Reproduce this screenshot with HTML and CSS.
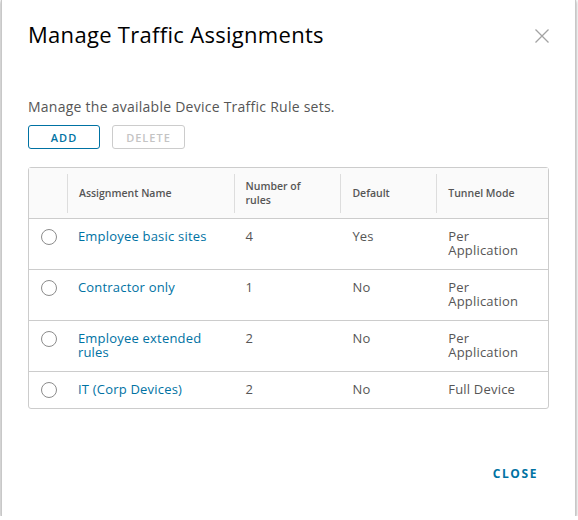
FILE: index.html
```html
<!DOCTYPE html>
<html>
<head>
<meta charset="utf-8">
<link rel="stylesheet" href="styles.css">
</head>
<body>
<div class="modal">
  <div class="modal-header">
    <h3 class="modal-title">Manage Traffic Assignments</h3>
    <button class="close-x" aria-label="Close">
      <svg width="16" height="16" viewBox="0 0 16 16"><path d="M1.5 1.5L14.5 14.5M14.5 1.5L1.5 14.5" stroke="#a3a3a3" stroke-width="1.3" fill="none"/></svg>
    </button>
  </div>
  <div class="modal-body">
    <p class="desc">Manage the available Device Traffic Rule sets.</p>
    <div class="btn-row">
      <button class="btn btn-primary">ADD</button>
      <button class="btn btn-disabled">DELETE</button>
    </div>
    <div class="grid">
      <div class="row head">
        <div class="cell c-sel"></div>
        <div class="cell c-name"><span class="sep"></span>Assignment Name</div>
        <div class="cell c-num"><span class="sep"></span>Number of rules</div>
        <div class="cell c-def"><span class="sep"></span>Default</div>
        <div class="cell c-mode"><span class="sep"></span>Tunnel Mode</div>
      </div>
      <div class="row">
        <div class="cell c-sel"><span class="radio"></span></div>
        <div class="cell c-name"><a class="link">Employee basic sites</a></div>
        <div class="cell c-num">4</div>
        <div class="cell c-def">Yes</div>
        <div class="cell c-mode">Per Application</div>
      </div>
      <div class="row">
        <div class="cell c-sel"><span class="radio"></span></div>
        <div class="cell c-name"><a class="link">Contractor only</a></div>
        <div class="cell c-num">1</div>
        <div class="cell c-def">No</div>
        <div class="cell c-mode">Per Application</div>
      </div>
      <div class="row">
        <div class="cell c-sel"><span class="radio"></span></div>
        <div class="cell c-name"><a class="link">Employee extended rules</a></div>
        <div class="cell c-num">2</div>
        <div class="cell c-def">No</div>
        <div class="cell c-mode">Per Application</div>
      </div>
      <div class="row last">
        <div class="cell c-sel"><span class="radio"></span></div>
        <div class="cell c-name"><a class="link">IT (Corp Devices)</a></div>
        <div class="cell c-num">2</div>
        <div class="cell c-def">No</div>
        <div class="cell c-mode">Full Device</div>
      </div>
    </div>
  </div>
  <div class="modal-footer">
    <button class="btn-link">CLOSE</button>
  </div>
</div>
</body>
</html>
```
FILE: styles.css
```css
html, body {
  margin: 0;
  padding: 0;
  background: #ffffff;
}
body {
  font-family: "Open Sans", "Noto Sans", sans-serif;
  color: #565656;
}
.modal {
  box-sizing: border-box;
  width: 575px;
  height: 516px;
  margin: 0 0 0 1px;
  background: #fff;
  border-left: 1px solid #c8c8c8;
  border-right: 1px solid #c8c8c8;
  box-shadow: 0 1px 3px rgba(0,0,0,0.45);
  padding: 0 26px 0 26px;
  display: flex;
  flex-direction: column;
}
.modal-header {
  display: flex;
  justify-content: space-between;
  align-items: flex-start;
  padding-top: 20px;
}
.modal-title {
  margin: 0;
  font-size: 22px;
  font-weight: 400;
  color: #000;
  line-height: 28px;
  letter-spacing: 0.3px;
}
.close-x {
  border: 0;
  background: none;
  padding: 0;
  margin: 8px -1px 0 0;
  width: 16px;
  height: 16px;
  display: flex;
}
.modal-body {
  padding-top: 50px;
}
.desc {
  margin: 0;
  font-size: 14px;
  line-height: 18px;
  color: #565656;
  letter-spacing: 0.25px;
}
.btn-row {
  display: flex;
  gap: 12px;
  margin-top: 9px;
}
.btn {
  box-sizing: border-box;
  height: 24px;
  border-radius: 3px;
  background: #fff;
  font-family: inherit;
  font-size: 11px;
  font-weight: 600;
  letter-spacing: 1px;
  padding: 0;
}
.btn-primary {
  width: 72px;
  border: 1px solid #0072a3;
  color: #0072a3;
}
.btn-disabled {
  width: 73px;
  border: 1px solid #cccccc;
  color: #c4c4c4;
}
.grid {
  margin-top: 18px;
  border: 1px solid #cccccc;
  border-radius: 3px;
  font-size: 13px;
  line-height: 14px;
  letter-spacing: 0.2px;
}
.row {
  display: flex;
  border-bottom: 1px solid #cccccc;
}
.row.last {
  border-bottom: 0;
}
.row.head {
  background: #fafafa;
  font-size: 10.5px;
  font-weight: 600;
  color: #565656;
  letter-spacing: 0;
}
.cell {
  box-sizing: border-box;
  padding: 10px 12px 12px 12px;
  position: relative;
}
.head .cell {
  padding: 11px 12px 11px 12px;
  min-height: 50px;
  display: flex;
  align-items: center;
  line-height: 14px;
}
.sep {
  position: absolute;
  left: 0;
  top: 6px;
  bottom: 5px;
  width: 1px;
  background: #dddddd;
}
.c-sel { width: 38px; }
.c-name { width: 167px; }
.c-num { width: 107px; }
.c-def { width: 96px; }
.c-mode { width: 112px; }
.c-name { padding-left: 11px; }
.c-num, .c-def { padding-left: 12px; }
.head .c-num { padding-right: 18px; }
.row .c-sel {
  padding: 11px 0 0 12px;
}
.radio {
  display: block;
  box-sizing: border-box;
  width: 16px;
  height: 16px;
  border: 1px solid #8c8c8c;
  border-radius: 50%;
  margin-top: -1px;
}
.link {
  color: #0072a3;
  text-decoration: none;
}
.modal-footer {
  margin-top: auto;
  display: flex;
  justify-content: flex-end;
  padding-bottom: 34px;
}
.btn-link {
  border: 0;
  background: none;
  padding: 0;
  margin-right: 11px;
  font-family: inherit;
  font-size: 12px;
  font-weight: 700;
  letter-spacing: 1.6px;
  color: #0072a3;
}
```
